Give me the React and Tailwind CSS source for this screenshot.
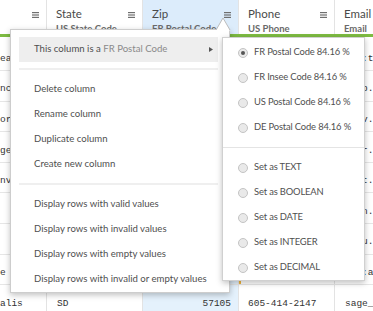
import React from "react";

const columns = [
  { key: "city", title: "City", sub: "City", width: "w-[47px]" },
  { key: "state", title: "State", sub: "US State Code", width: "w-[96px]" },
  { key: "zip", title: "Zip", sub: "FR Postal Code", width: "w-[96px]", selected: true },
  { key: "phone", title: "Phone", sub: "US Phone", width: "w-[96px]" },
  { key: "email", title: "Email", sub: "Email", width: "w-[120px]" },
];

const rows = [
  { city: "eattle", state: "WA", zip: "98101", phone: "206-711-6498", email: "ann:tyler@mail.com" },
  { city: "nchorage", state: "AK", zip: "99501", phone: "907-921-2010", email: "mcep.lewis@mail.com" },
  { city: "ortland", state: "OR", zip: "97201", phone: "503-939-3153", email: "jolv.ross@mail.com" },
  { city: "geles", state: "CA", zip: "90001", phone: "213-975-8765", email: "kior.brown@mail.com" },
  { city: "nver", state: "CO", zip: "80201", phone: "303-724-7371", email: "lzet.davis@mail.com" },
  { city: "", state: "NV", zip: "89501", phone: "775-638-9963", email: "wion.price@mail.com" },
  { city: "", state: "UT", zip: "84101", phone: "801-555-0139", email: "desu.gray@mail.com" },
  { city: "e", state: "ID", zip: "83701", phone: "208-555-014", email: "kia:a@mail.com", invalid: true },
  { city: "alis", state: "SD", zip: "57105", phone: "605-414-2147", email: "sage_wieser@cox.net" },
];

const MenuIcon = () => (
  <svg width="7" height="6" viewBox="0 0 7 6" className="mt-[6px] shrink-0">
    <rect x="0" y="0" width="7" height="1.2" fill="#6f6f6f" />
    <rect x="0" y="2.4" width="7" height="1.2" fill="#6f6f6f" />
    <rect x="0" y="4.8" width="7" height="1.2" fill="#6f6f6f" />
  </svg>
);

const Radio = ({ checked }) => (
  <span className="w-[10px] h-[10px] rounded-full border border-[#c4c4c4] bg-[#e9e9e9] flex items-center justify-center shrink-0">
    {checked && <span className="w-[4px] h-[4px] rounded-full bg-[#555]" />}
  </span>
);

const ColumnMenu = () => (
  <div className="absolute left-[10px] top-[29px] w-[220px] bg-white border border-[#cdcdcd] shadow-[0_2px_6px_rgba(0,0,0,0.25)] pl-[8px] pr-[11px] pt-[7px] text-[9.6px] text-[#4f4f4f]">
    <div className="h-[25px] bg-[#eeeeee] flex items-center justify-between pl-[15px] pr-[5px]">
      <span>
        This column is a <span className="text-[#8a8a8a]">FR Postal Code</span>
      </span>
      <svg width="4" height="5" viewBox="0 0 4 5">
        <polygon points="0,0 4,2.5 0,5" fill="#555" />
      </svg>
    </div>
    <div className="h-[2px] bg-[#efefef] mt-[6px] mb-[7px]" />
    {["Delete column", "Rename column", "Duplicate column", "Create new column"].map((label) => (
      <div key={label} className="h-[25px] flex items-center pl-[15px]">
        {label}
      </div>
    ))}
    <div className="h-[2px] bg-[#efefef] mt-[6px] mb-[7px]" />
    {[
      "Display rows with valid values",
      "Display rows with invalid values",
      "Display rows with empty values",
      "Display rows with invalid or empty values",
    ].map((label) => (
      <div key={label} className="h-[25px] flex items-center pl-[15px]">
        {label}
      </div>
    ))}
  </div>
);

const TypeMenu = () => (
  <div className="absolute left-[222px] top-[37px] w-[143px] bg-white border border-[#d0d0d0] shadow-[0_2px_6px_rgba(0,0,0,0.25)] pt-[2px] text-[9.4px] tracking-[-0.15px] text-[#4f4f4f]">
    {[
      ["FR Postal Code 84.16 %", true],
      ["FR Insee Code 84.16 %", false],
      ["US Postal Code 84.16 %", false],
      ["DE Postal Code 84.16 %", false],
    ].map(([label, checked]) => (
      <div key={label} className="h-[25px] flex items-center gap-[6px] pl-[15px]">
        <Radio checked={checked} />
        {label}
      </div>
    ))}
    <div className="h-px bg-[#e4e4e4] mt-[7px] mb-[7px]" />
    {["Set as TEXT", "Set as BOOLEAN", "Set as DATE", "Set as INTEGER", "Set as DECIMAL"].map((label) => (
      <div key={label} className="h-[25px] flex items-center gap-[6px] pl-[15px]">
        <Radio />
        {label}
      </div>
    ))}
  </div>
);

export default function App() {
  return (
    <div className="relative w-[373px] h-[311px] overflow-hidden bg-white font-['Lato',sans-serif]">
      <div className="flex h-[34px]">
        {columns.map((col, i) => (
          <div
            key={col.key}
            className={`${col.width} shrink-0 border-r border-[#e3e3e3] flex justify-between pr-[7px] pt-[6px] overflow-hidden ${
              col.selected ? "bg-[#dcecfb]" : ""
            } ${i === 0 ? "pl-0" : "pl-[9px]"}`}
          >
            {i === 0 ? (
              <span />
            ) : (
              <div className="whitespace-nowrap">
                <div className="text-[11.5px] leading-[16px] text-[#4a4a4a]">{col.title}</div>
                <div className="text-[9.5px] leading-[14px] font-bold text-[#6a6a6a]">{col.sub}</div>
              </div>
            )}
            {i < 4 && <MenuIcon />}
          </div>
        ))}
      </div>
      <div className="h-[3px] bg-[#7dbb42]" />
      <div className="font-['Liberation_Mono',monospace] text-[9.5px] text-[#333]">
        {rows.map((row, r) => (
          <div
            key={r}
            className={`flex border-b border-[#e6e6e6] ${r === 0 ? "h-[34px]" : "h-[30.6px]"}`}
          >
            <div className="w-[47px] shrink-0 border-r border-[#e3e3e3] flex items-end pb-[4px] overflow-hidden whitespace-nowrap">
              {row.city}
            </div>
            <div className="w-[96px] shrink-0 border-r border-[#e3e3e3] flex items-end pb-[4px] pl-[10px]">
              {row.state}
            </div>
            <div className="w-[96px] shrink-0 border-r border-[#e3e3e3] bg-[#e4f1fc] flex items-end justify-end pb-[4px] pr-[7px]">
              {row.zip}
            </div>
            <div
              className={`w-[96px] shrink-0 border-r border-[#e3e3e3] flex items-end pb-[4px] pl-[9px] ${
                row.invalid ? "border-l-2 border-l-[#f0b43c]" : ""
              }`}
            >
              {row.phone}
            </div>
            <div className="w-[120px] shrink-0 flex items-end pb-[4px] pl-[10px] whitespace-nowrap overflow-hidden">
              {row.email}
            </div>
          </div>
        ))}
      </div>
      <ColumnMenu />
      <svg className="absolute left-[214px] top-[17px]" width="18" height="15" viewBox="0 0 18 15">
        <polygon points="2,13.5 9,1 16,13.5" fill="#fff" />
        <polyline points="2,13 9,1 16,13" fill="none" stroke="#bdbdbd" strokeWidth="1" />
      </svg>
      <TypeMenu />
    </div>
  );
}
